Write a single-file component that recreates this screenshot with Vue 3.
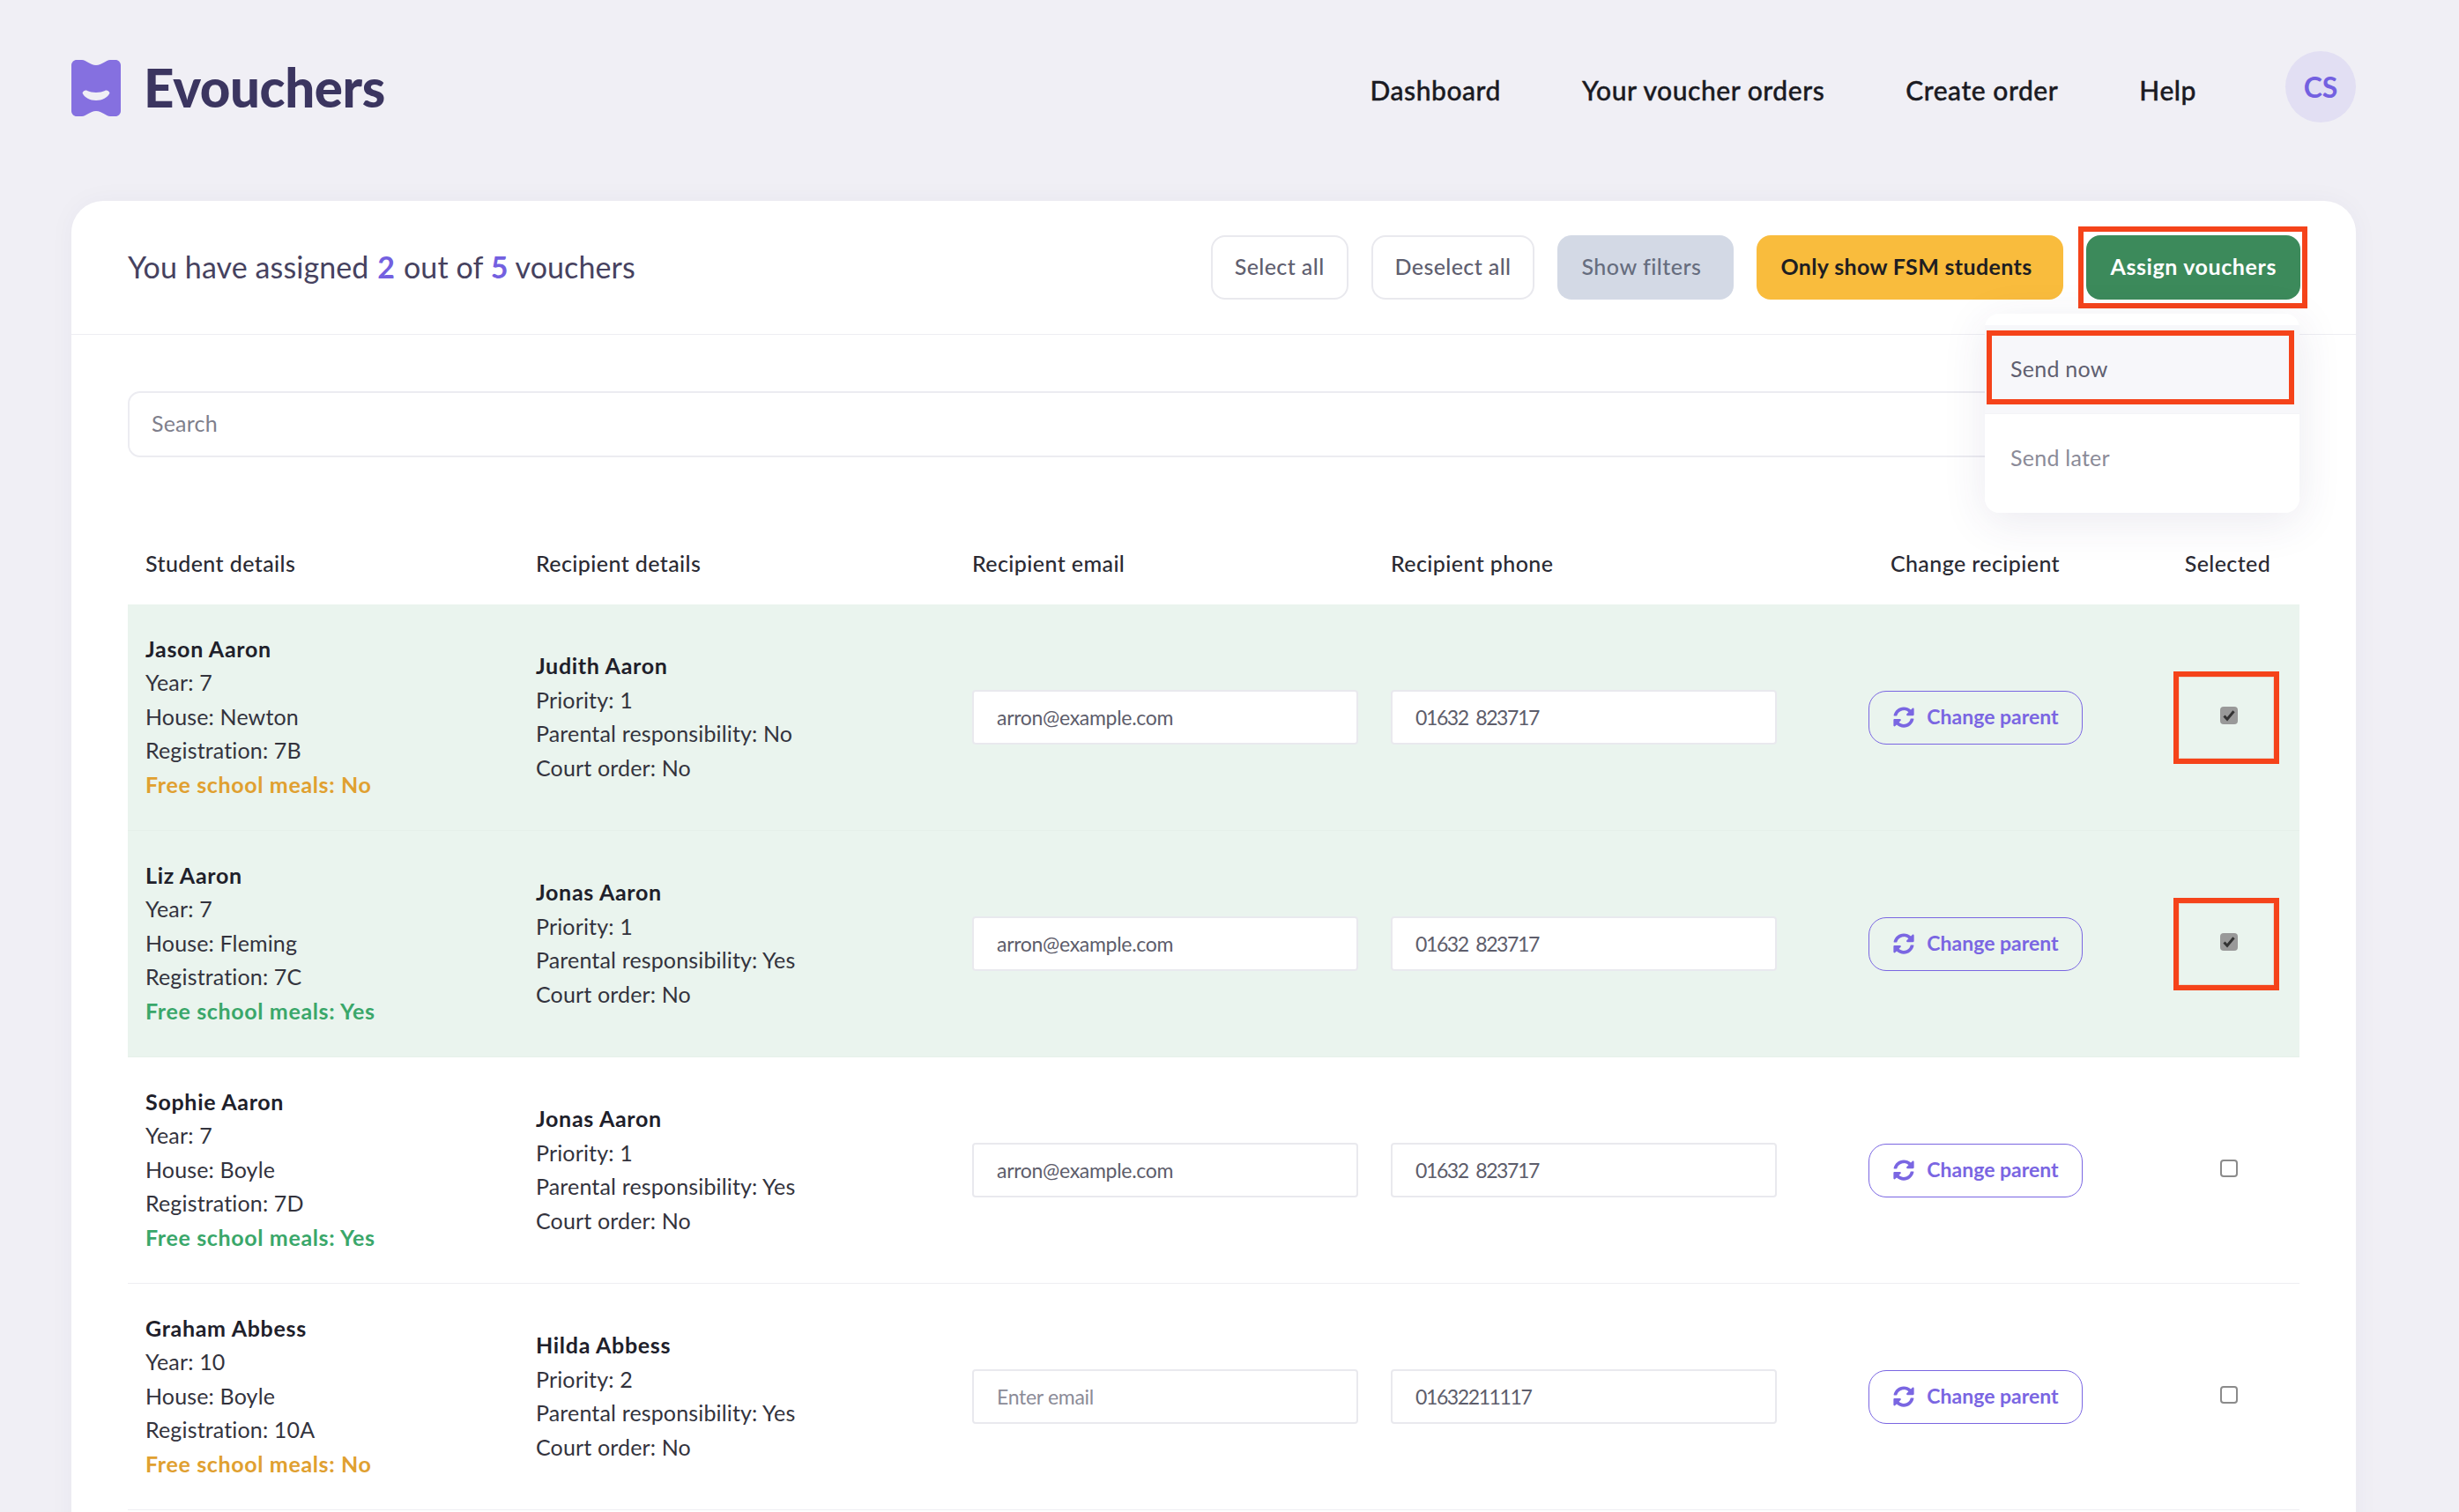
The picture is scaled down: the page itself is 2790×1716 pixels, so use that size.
<script setup>
const students = [
  { name: 'Jason Aaron', year: 7, house: 'Newton', reg: '7B', fsm: false, parent: 'Judith Aaron', priority: 1, resp: 'No', email: 'arron@example.com', phone: '01632 823717', selected: true },
  { name: 'Liz Aaron', year: 7, house: 'Fleming', reg: '7C', fsm: true, parent: 'Jonas Aaron', priority: 1, resp: 'Yes', email: 'arron@example.com', phone: '01632 823717', selected: true },
  { name: 'Sophie Aaron', year: 7, house: 'Boyle', reg: '7D', fsm: true, parent: 'Jonas Aaron', priority: 1, resp: 'Yes', email: 'arron@example.com', phone: '01632 823717', selected: false },
  { name: 'Graham Abbess', year: 10, house: 'Boyle', reg: '10A', fsm: false, parent: 'Hilda Abbess', priority: 2, resp: 'Yes', email: '', phone: '01632211117', selected: false },
]
const syncIcon = 'M370.72 133.28C339.458 104.008 298.888 87.962 255.848 88c-77.458.068-144.328 53.178-162.791 126.85-1.344 5.363-6.122 9.15-11.651 9.15H24.103c-7.498 0-13.194-6.807-11.807-14.176C33.933 94.924 134.813 8 256 8c66.448 0 126.791 26.136 171.315 68.685L463.03 40.97C478.149 25.851 504 36.559 504 57.941V192c0 13.255-10.745 24-24 24H345.941c-21.382 0-32.09-25.851-16.971-40.971l41.75-41.749zM32 296h134.059c21.382 0 32.09 25.851 16.971 40.971l-41.75 41.75c31.262 29.273 71.835 45.319 114.876 45.28 77.418-.07 144.315-53.144 162.787-126.849 1.344-5.363 6.122-9.15 11.651-9.15h57.304c7.498 0 13.194 6.807 11.807 14.176C478.067 417.076 377.187 504 256 504c-66.448 0-126.791-26.136-171.315-68.685L48.97 471.03C33.851 486.149 8 475.441 8 454.059V320c0-13.255 10.745-24 24-24z'
</script>

<template>
  <div class="page">
    <header class="topbar">
      <div class="brand">
        <svg class="logo" viewBox="0 0 56 64">
          <path d="M6 0h6c5 0 9 6 16 6s11-6 16-6h6c3.300 0 6 2.700 6 6v52c0 3.300-2.700 6-6 6h-6c-5 0-9-6-16-6s-11 6-16 6H6c-3.300 0-6-2.700-6-6V6c0-3.300 2.700-6 6-6z" fill="#8570e0" />
          <path d="M12.500 37.500C13.500 35 16 34 18 35c5 2.500 15 2.500 20 0 2-1 4.500 0 5.500 2.500C41 43 35 46 28 46s-13-3-15.500-8.500z" fill="#f0eff5" />
        </svg>
        <span class="brand-name">Evouchers</span>
      </div>
      <nav class="nav">
        <a>Dashboard</a>
        <a>Your voucher orders</a>
        <a>Create order</a>
        <a>Help</a>
        <div class="avatar">CS</div>
      </nav>
    </header>

    <section class="card">
      <div class="card-head">
        <h2 class="summary">You have assigned <b>2</b> out of <b>5</b> vouchers</h2>
        <div class="actions">
          <button class="btn btn-plain">Select all</button>
          <button class="btn btn-plain">Deselect all</button>
          <button class="btn btn-grey">Show filters</button>
          <button class="btn btn-yellow">Only show FSM students</button>
          <div class="assign">
            <button class="btn btn-green">Assign vouchers</button>
            <span class="mark mark-assign"></span>
            <div class="menu">
              <div class="menu-item active">Send now<span class="mark mark-send"></span></div>
              <div class="menu-item">Send later</div>
            </div>
          </div>
        </div>
      </div>

      <div class="card-body">
        <input class="search" type="text" placeholder="Search" />

        <div class="row head">
          <div>Student details</div>
          <div>Recipient details</div>
          <div>Recipient email</div>
          <div>Recipient phone</div>
          <div class="center">Change recipient</div>
          <div class="center">Selected</div>
        </div>

        <div v-for="s in students" :key="s.name" class="row student" :class="{ selected: s.selected }">
          <div class="info">
            <strong>{{ s.name }}</strong>
            <div>Year: {{ s.year }}</div>
            <div>House: {{ s.house }}</div>
            <div>Registration: {{ s.reg }}</div>
            <div class="fsm" :class="s.fsm ? 'yes' : 'no'">Free school meals: {{ s.fsm ? 'Yes' : 'No' }}</div>
          </div>
          <div class="info">
            <strong>{{ s.parent }}</strong>
            <div>Priority: {{ s.priority }}</div>
            <div>Parental responsibility: {{ s.resp }}</div>
            <div>Court order: No</div>
          </div>
          <div class="email-col"><input class="field" type="text" :value="s.email" placeholder="Enter email" /></div>
          <div class="phone-col"><input class="field phone" type="text" :value="s.phone" /></div>
          <div class="center">
            <button class="change">
              <svg viewBox="0 0 512 512"><path :d="syncIcon" fill="#7a66e2" /></svg>
              <span>Change parent</span>
            </button>
          </div>
          <div class="center">
            <div class="check-cell">
              <span class="check" :class="{ on: s.selected }">
                <svg v-if="s.selected" viewBox="0 0 20 20"><path d="M4.500 10.500l3.500 3.800 7.500-9" fill="none" stroke="#333" stroke-width="3" /></svg>
              </span>
              <span v-if="s.selected" class="mark mark-check"></span>
            </div>
          </div>
        </div>
      </div>
    </section>
  </div>
</template>

<style>
html, body {
  margin: 0;
  background: #f0eff5;
}
</style>

<style scoped>
.page {
  height: 1716px;
  overflow: hidden;
  background: #f0eff5;
  font-family: Lato, "Open Sans", sans-serif;
  color: #2a2a33;
  padding: 58px 117px 0 81px;
  box-sizing: border-box;
}
.topbar {
  display: flex;
  justify-content: space-between;
  align-items: center;
  height: 81px;
  margin-bottom: 89px;
}
.brand {
  display: flex;
  align-items: center;
  gap: 26px;
}
.logo {
  width: 56px;
  height: 64px;
  margin-top: 2px;
}
.brand-name {
  font-size: 60px;
  font-weight: 900;
  letter-spacing: -0.4px;
  color: #3b3560;
}
.nav {
  display: flex;
  align-items: center;
  gap: 92px;
  font-size: 30px;
  font-weight: 500;
  letter-spacing: 0.55px;
  -webkit-text-stroke: 0.4px #1a1a22;
  color: #1a1a22;
}
.nav a {
  margin-top: 7px;
}
.avatar {
  width: 80px;
  height: 81px;
  margin-left: 9px;
  border-radius: 50%;
  background: #e2dff3;
  color: #7360e0;
  font-size: 32px;
  font-weight: 700;
  letter-spacing: 0;
  -webkit-text-stroke: 0;
  display: flex;
  align-items: center;
  justify-content: center;
}
.card {
  background: #fff;
  border-radius: 36px 36px 0 0;
  box-shadow: 0 0 30px rgba(60, 50, 110, 0.04);
  padding-bottom: 100px;
}
.card-head {
  display: flex;
  justify-content: space-between;
  align-items: center;
  height: 151px;
  padding: 0 63px 0 64px;
  border-bottom: 1px solid #eeeef2;
}
.summary {
  margin: 0 0 2px;
  font-size: 34px;
  font-weight: 400;
  letter-spacing: 0.1px;
  color: #46425f;
}
.summary b {
  font-weight: 700;
  margin: 0 1px;
  color: #7360e0;
}
.summary b:last-child {
  margin: 0;
}
.actions {
  display: flex;
  gap: 26px;
}
.btn {
  height: 73px;
  padding: 0 27px 3px;
  border: 0;
  border-radius: 16px;
  font-family: inherit;
  font-size: 25px;
  font-weight: 500;
  letter-spacing: 0.5px;
  white-space: nowrap;
}
.btn-plain {
  padding: 0 25px 3px;
  background: #fff;
  border: 2px solid #e9e9ee;
  color: #5f5f70;
  letter-spacing: 0.4px;
}
.btn-grey {
  padding-right: 37px;
  background: #d3d9e5;
  color: #666d7e;
}
.btn-yellow {
  padding-right: 36px;
  background: #f9bc3d;
  color: #1e1e22;
  font-weight: 700;
  letter-spacing: 0.35px;
}
.btn-green {
  background: #3c8a5b;
  color: #fff;
  font-weight: 700;
  letter-spacing: 0.6px;
}
.assign {
  position: relative;
}
.mark {
  position: absolute;
  box-sizing: border-box;
  border: 6px solid #f5431a;
  pointer-events: none;
}
.mark-assign {
  inset: -10px -8px -10px -9px;
}
.menu {
  position: absolute;
  top: 89px;
  right: 1px;
  width: 357px;
  height: 226px;
  box-sizing: border-box;
  padding: 13px 0 12px;
  background: #fff;
  border-radius: 16px;
  box-shadow: 0 10px 50px rgba(60, 50, 110, 0.1);
  z-index: 2;
}
.menu-item {
  position: relative;
  height: 100px;
  line-height: 98px;
  padding-left: 29px;
  font-size: 25px;
  letter-spacing: 0.25px;
  color: #8b8b98;
  border-bottom: 1px solid #f3f3f6;
}
.menu-item:last-child {
  border-bottom: 0;
}
.menu-item.active {
  background: #f7f7fa;
  color: #5f5f70;
}
.mark-send {
  left: 2px;
  right: 6px;
  top: 6px;
  height: 84px;
}
.card-body {
  padding: 64px 64px 0 64px;
}
.search {
  display: block;
  width: 100%;
  height: 75px;
  box-sizing: border-box;
  padding: 0 25px 3px;
  border: 2px solid #ececf1;
  border-radius: 14px;
  font-family: inherit;
  font-size: 25px;
  letter-spacing: 0.2px;
  outline: none;
}
.search::placeholder {
  color: #7f7f8c;
}
.row {
  display: grid;
  grid-template-columns: 443px 495px 475px 478px 410px 163px;
  align-items: center;
}
.row > div {
  padding-left: 20px;
  padding-right: 20px;
  box-sizing: border-box;
}
.row > .center {
  padding: 0;
  display: flex;
  justify-content: center;
  text-align: center;
}
.row > .email-col {
  padding-right: 17px;
}
.head {
  height: 167px;
  padding-top: 73px;
  box-sizing: border-box;
  font-size: 25px;
  letter-spacing: 0.4px;
  color: #2a2a33;
  font-weight: 500;
}
.student {
  height: 257px;
  border-bottom: 1px solid #eeeef2;
  box-sizing: border-box;
}
.student.selected {
  background: #eaf4ee;
  border-bottom-color: #e6f0ea;
}
.info {
  font-size: 25px;
  line-height: 38.5px;
  letter-spacing: 0.15px;
  color: #33333d;
  margin-top: -2px;
}
.info strong {
  display: block;
  font-weight: 700;
  letter-spacing: 0.7px;
  color: #20202a;
}
.fsm {
  font-weight: 700;
  letter-spacing: 0.65px;
}
.fsm.yes {
  color: #3aa76a;
}
.fsm.no {
  color: #e0a030;
}
.field {
  display: block;
  width: 100%;
  height: 62px;
  box-sizing: border-box;
  padding: 0 26px;
  background: #fff;
  border: 2px solid #e9e9ee;
  border-radius: 4px;
  font-family: inherit;
  font-size: 23px;
  letter-spacing: -0.3px;
  color: #5d5d6b;
  outline: none;
}
.field.phone {
  letter-spacing: -1.4px;
  word-spacing: 4px;
}
.field::placeholder {
  color: #8b8b98;
}
.change {
  display: flex;
  align-items: center;
  justify-content: center;
  gap: 14px;
  width: 243px;
  height: 61px;
  margin-top: 1px;
  background: transparent;
  border: 1.5px solid #7a66e2;
  border-radius: 20px;
  font-family: inherit;
  font-size: 23px;
  font-weight: 700;
  color: #7a66e2;
}
.change span {
  margin-top: -3px;
}
.change svg {
  width: 24px;
  height: 24px;
  margin-top: -2px;
  margin-left: 2px;
}
.check-cell {
  position: relative;
  width: 20px;
  height: 20px;
  margin-top: -4px;
  margin-left: 2px;
}
.check {
  display: block;
  width: 20px;
  height: 20px;
  box-sizing: border-box;
  background: #fff;
  border: 2px solid #8b8b8b;
  border-radius: 4px;
}
.check.on {
  background: #999;
  border: 0;
}
.check svg {
  display: block;
  width: 20px;
  height: 20px;
}
.mark-check {
  left: -53px;
  top: -40px;
  width: 120px;
  height: 105px;
  box-shadow: inset 0 0 0 1px #e8dccf;
}
</style>
